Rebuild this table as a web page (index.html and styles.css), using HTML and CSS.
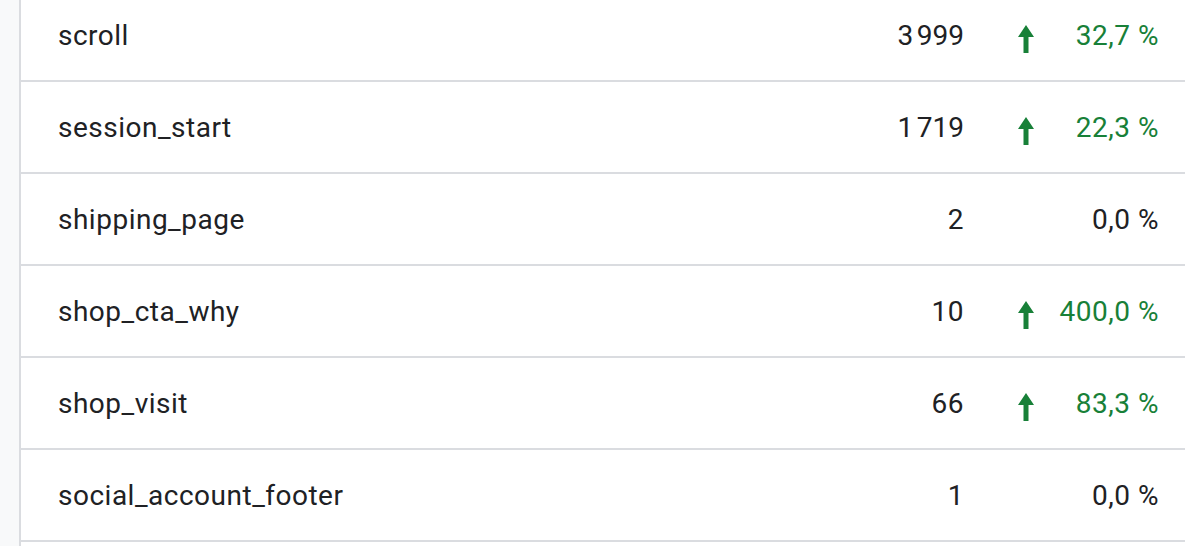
FILE: index.html
```html
<!DOCTYPE html>
<html>
<head>
<meta charset="utf-8">
<link rel="stylesheet" href="styles.css">
</head>
<body>
<div class="page">
  <div class="rail"></div>
  <div class="table">
    <div class="row">
      <div class="name">scroll</div>
      <div class="value">3&#8239;999</div>
      <div class="change up">
        <svg class="arrow" viewBox="0 0 16 28"><polygon points="8,0 16,12 10.5,12 10.5,28 5.5,28 5.5,12 0,12"/></svg>
        <span class="pct">32,7 %</span>
      </div>
    </div>
    <div class="row">
      <div class="name">session_start</div>
      <div class="value">1&#8239;719</div>
      <div class="change up">
        <svg class="arrow" viewBox="0 0 16 28"><polygon points="8,0 16,12 10.5,12 10.5,28 5.5,28 5.5,12 0,12"/></svg>
        <span class="pct">22,3 %</span>
      </div>
    </div>
    <div class="row">
      <div class="name">shipping_page</div>
      <div class="value">2</div>
      <div class="change">
        <span class="pct">0,0 %</span>
      </div>
    </div>
    <div class="row">
      <div class="name">shop_cta_why</div>
      <div class="value">10</div>
      <div class="change up">
        <svg class="arrow" viewBox="0 0 16 28"><polygon points="8,0 16,12 10.5,12 10.5,28 5.5,28 5.5,12 0,12"/></svg>
        <span class="pct">400,0 %</span>
      </div>
    </div>
    <div class="row">
      <div class="name">shop_visit</div>
      <div class="value">66</div>
      <div class="change up">
        <svg class="arrow" viewBox="0 0 16 28"><polygon points="8,0 16,12 10.5,12 10.5,28 5.5,28 5.5,12 0,12"/></svg>
        <span class="pct">83,3 %</span>
      </div>
    </div>
    <div class="row">
      <div class="name">social_account_footer</div>
      <div class="value">1</div>
      <div class="change">
        <span class="pct">0,0 %</span>
      </div>
    </div>
    <div class="row"></div>
  </div>
</div>
</body>
</html>
```
FILE: styles.css
```css
html, body {
  margin: 0;
  padding: 0;
  background: #ffffff;
  overflow: hidden;
}

.page {
  display: flex;
  height: 546px;
  overflow: hidden;
  font-family: Roboto, "Liberation Sans", Arial, sans-serif;
  font-size: 28px;
  letter-spacing: 0.5px;
  color: #202124;
}

.rail {
  width: 19px;
  flex: none;
  background: #f8f9fa;
  border-right: 2px solid #dadce0;
}

.table {
  flex: 1;
  margin-top: -10px;
}

.row {
  display: flex;
  align-items: center;
  height: 90px;
  border-bottom: 2px solid #dadce0;
  padding: 0 26px 0 37px;
}

.name {
  flex: 1;
}

.value {
  width: 160px;
  text-align: right;
}

.change {
  width: 195px;
  display: flex;
  align-items: center;
  padding-left: 54px;
  box-sizing: border-box;
}

.change.up {
  color: #188038;
}

.arrow {
  width: 16px;
  height: 28px;
  fill: #188038;
  margin-top: 8px;
  flex: none;
}

.pct {
  flex: 1;
  text-align: right;
}
```
